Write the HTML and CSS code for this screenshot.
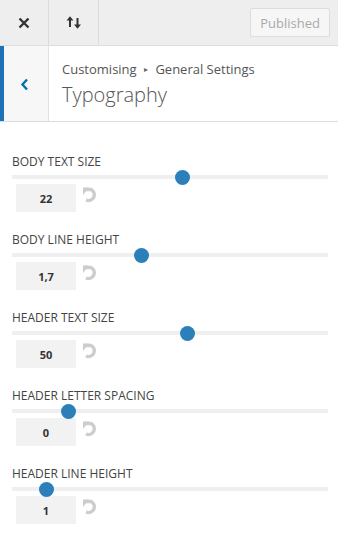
FILE: index.html
```html
<!DOCTYPE html>
<html>
<head>
<meta charset="utf-8">
<link rel="stylesheet" href="styles.css">
</head>
<body>
<div class="topbar">
  <div class="tb-btn close-btn">
    <svg width="12" height="12" viewBox="0 0 12 12"><path d="M1.5 1.5 L10.5 10.5 M10.5 1.5 L1.5 10.5" stroke="#333" stroke-width="2.4" stroke-linecap="butt"/></svg>
  </div>
  <div class="tb-btn sort-btn">
    <svg width="18" height="15" viewBox="0 0 18 15"><path d="M5 12 V3" stroke="#333" stroke-width="2"/><path d="M1.5 5.5 L5 1.2 L8.5 5.5 Z" fill="#333"/><path d="M12.5 3 V12" stroke="#333" stroke-width="2"/><path d="M9 9.5 L12.5 13.8 L16 9.5 Z" fill="#333"/></svg>
  </div>
  <div class="publish">Published</div>
</div>

<div class="section-head">
  <div class="back">
    <svg width="9" height="13" viewBox="0 0 9 13"><path d="M7 1.5 L2.5 6.5 L7 11.5" stroke="#0073aa" stroke-width="2.4" fill="none"/></svg>
  </div>
  <div class="titles">
    <div class="crumb">Customising <span class="tri">▸</span> General Settings</div>
    <div class="title">Typography</div>
  </div>
</div>

<div class="controls">
  <div class="control">
    <div class="label">BODY TEXT SIZE</div>
    <div class="slider"><div class="track"></div><div class="thumb" style="left:54.1%"></div></div>
    <div class="row"><div class="num">22</div><svg class="reset" width="16" height="17" viewBox="0 0 16 17"><path d="M2 3.5 H8 A5.6 5.6 0 1 1 3 14" stroke="#cdcdcd" stroke-width="3.4" fill="none"/><path d="M0 1.5 L6 1.5 L0 9 Z" fill="#cdcdcd"/></svg></div>
  </div>
  <div class="control">
    <div class="label">BODY LINE HEIGHT</div>
    <div class="slider"><div class="track"></div><div class="thumb" style="left:41.1%"></div></div>
    <div class="row"><div class="num">1,7</div><svg class="reset" width="16" height="17" viewBox="0 0 16 17"><path d="M2 3.5 H8 A5.6 5.6 0 1 1 3 14" stroke="#cdcdcd" stroke-width="3.4" fill="none"/><path d="M0 1.5 L6 1.5 L0 9 Z" fill="#cdcdcd"/></svg></div>
  </div>
  <div class="control">
    <div class="label">HEADER TEXT SIZE</div>
    <div class="slider"><div class="track"></div><div class="thumb" style="left:55.4%"></div></div>
    <div class="row"><div class="num">50</div><svg class="reset" width="16" height="17" viewBox="0 0 16 17"><path d="M2 3.5 H8 A5.6 5.6 0 1 1 3 14" stroke="#cdcdcd" stroke-width="3.4" fill="none"/><path d="M0 1.5 L6 1.5 L0 9 Z" fill="#cdcdcd"/></svg></div>
  </div>
  <div class="control">
    <div class="label">HEADER LETTER SPACING</div>
    <div class="slider"><div class="track"></div><div class="thumb" style="left:18%"></div></div>
    <div class="row"><div class="num">0</div><svg class="reset" width="16" height="17" viewBox="0 0 16 17"><path d="M2 3.5 H8 A5.6 5.6 0 1 1 3 14" stroke="#cdcdcd" stroke-width="3.4" fill="none"/><path d="M0 1.5 L6 1.5 L0 9 Z" fill="#cdcdcd"/></svg></div>
  </div>
  <div class="control">
    <div class="label">HEADER LINE HEIGHT</div>
    <div class="slider"><div class="track"></div><div class="thumb" style="left:10.8%"></div></div>
    <div class="row"><div class="num">1</div><svg class="reset" width="16" height="17" viewBox="0 0 16 17"><path d="M2 3.5 H8 A5.6 5.6 0 1 1 3 14" stroke="#cdcdcd" stroke-width="3.4" fill="none"/><path d="M0 1.5 L6 1.5 L0 9 Z" fill="#cdcdcd"/></svg></div>
  </div>
</div>
</body>
</html>
```

FILE: styles.css
```css
* { box-sizing: border-box; }
html, body { margin: 0; padding: 0; }
body {
  width: 338px;
  height: 534px;
  overflow: hidden;
  background: #fff;
  font-family: "Open Sans", "Noto Sans", sans-serif;
  color: #555;
}
.topbar {
  height: 46px;
  background: #eeeeee;
  border-bottom: 1px solid #dddddd;
  display: flex;
  align-items: center;
}
.tb-btn {
  height: 45px;
  display: flex;
  align-items: center;
  justify-content: center;
  border-right: 1px solid #dcdcdc;
}
.close-btn { width: 49px; }
.sort-btn { width: 50px; }
.publish {
  margin-left: auto;
  margin-right: 8px;
  height: 29px;
  padding: 0 9px;
  display: flex;
  align-items: center;
  border: 1px solid #dddddd;
  border-radius: 2px;
  background: #f6f6f6;
  color: #a7aaad;
  font-size: 13px;
}
.section-head {
  height: 76px;
  display: flex;
  background: #fff;
  border-bottom: 1px solid #dddddd;
}
.back {
  width: 49px;
  border-left: 4px solid #1e72b8;
  border-right: 1px solid #e2e2e2;
  background: #f7f7f7;
  display: flex;
  align-items: center;
  justify-content: center;
}
.back svg { margin-left: -4px; margin-top: 2px; }
.titles {
  padding: 14px 0 0 13px;
}
.crumb {
  font-size: 13px;
  line-height: 18px;
  color: #555;
}
.tri { font-size: 8px; position: relative; top: -2px; padding: 0 4px; color: #666; }
.title {
  font-size: 20px;
  font-weight: 300;
  line-height: 28px;
  color: #555;
  margin-top: 1px;
}
.controls {
  padding: 31px 10px 0 12px;
}
.control {
  height: 78px;
}
.label {
  font-size: 12px;
  line-height: 18px;
  color: #444;
}
.slider {
  position: relative;
  height: 12px;
}
.track {
  position: absolute;
  left: 0;
  right: 0;
  top: 4px;
  height: 4px;
  background: #efefef;
}
.thumb {
  position: absolute;
  top: -1.5px;
  width: 15px;
  height: 15px;
  margin-left: -7.5px;
  border-radius: 50%;
  background: #2b80b9;
}
.row {
  display: flex;
  align-items: center;
  margin-top: 1px;
}
.num {
  margin-left: 4px;
  width: 60px;
  height: 28px;
  background: #f2f2f2;
  display: flex;
  align-items: center;
  justify-content: center;
  font-size: 11px;
  font-weight: 700;
  color: #333;
}
.reset {
  margin-left: 7px;
  margin-top: -7px;
}
```
